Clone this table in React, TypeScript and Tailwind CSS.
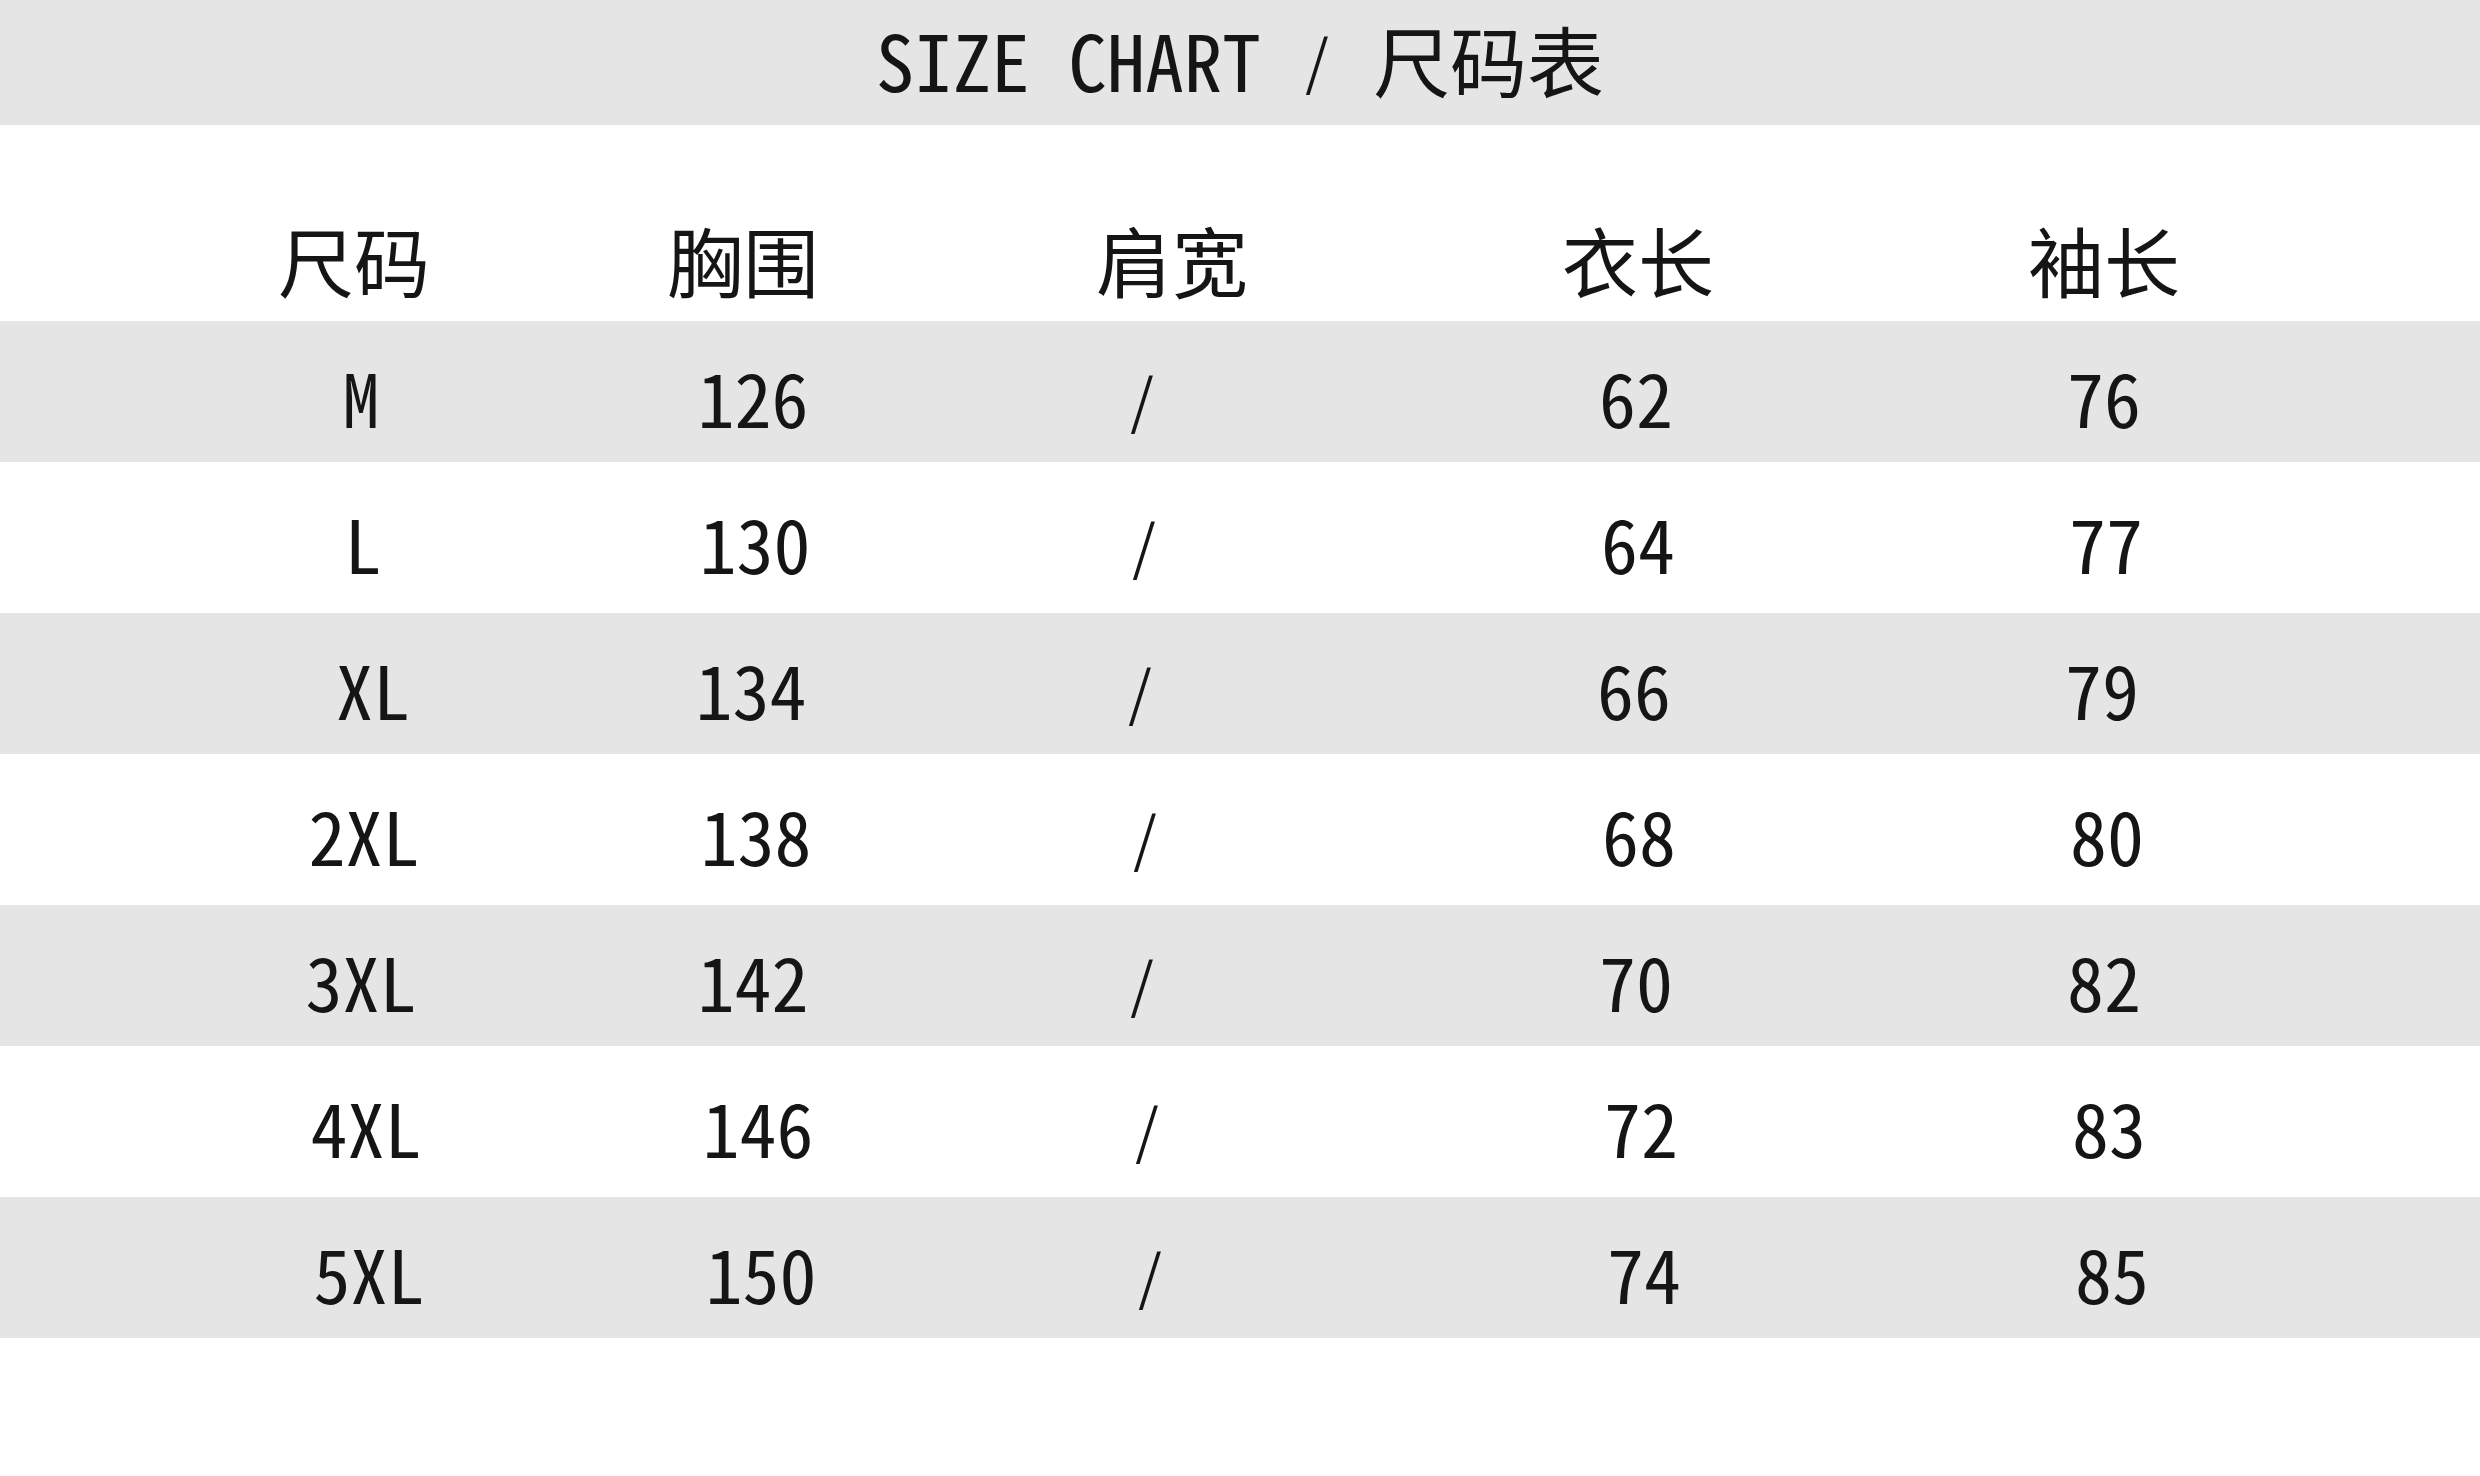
const font =
  "font-['Noto_Sans_Mono_CJK_SC','Noto_Sans_CJK_SC','DejaVu_Sans_Mono',monospace]";
const thinSlash = "font-['DejaVu_Sans','Noto_Sans_Mono_CJK_SC',sans-serif] font-extralight";

const headers = ["尺码", "胸围", "肩宽", "衣长", "袖长"];

// the source image drifts a few px to the right as it goes down
const rows = [
  { pad: "pl-[158px]", v: ["M", "126", "/", "62", "76"] },
  { pad: "pl-[160px]", v: ["L", "130", "/", "64", "77"] },
  { pad: "pl-[156px]", v: ["XL", "134", "/", "66", "79"] },
  { pad: "pl-[161px]", v: ["2XL", "138", "/", "68", "80"] },
  { pad: "pl-[158px]", v: ["3XL", "142", "/", "70", "82"] },
  { pad: "pl-[163px]", v: ["4XL", "146", "/", "72", "83"] },
  { pad: "pl-[166px]", v: ["5XL", "150", "/", "74", "85"] },
];

// nudges so each column sits where the chart puts it
const headCell = ["pr-[8px]", "pr-[14px]", "pl-[44px]", "pl-[4px]", ""];
const dataCell = ["pl-[6px]", "pl-[6px]", "pr-[16px] pt-[12px]", "", ""];

const cols = "grid grid-cols-[400px_384px_416px_556px_380px]";

export default function App() {
  return (
    <main
      className={`h-[1476px] w-[2480px] overflow-hidden bg-white text-[#151515] ${font}`}
    >
      <header className="flex h-[125px] items-center justify-center bg-[#e5e5e5] pb-[8px] text-[77px] leading-none">
        SIZE CHART
        <span className={`px-[44px] pt-[8px] text-[72px] ${thinSlash}`}>/</span>
        尺码表
      </header>

      <div className={`${cols} h-[196px] items-end pb-[24px] pl-[158px] text-[76px] leading-none`}>
        {headers.map((h, i) => (
          <div key={h} className={`text-center ${headCell[i]}`}>
            {h}
          </div>
        ))}
      </div>

      {rows.map((r, idx) => (
        <div
          key={r.v[0]}
          className={`${cols} ${r.pad} items-center pt-[8px] text-[74px] leading-none ${
            idx % 2 === 0 ? "h-[141px] bg-[#e5e5e5]" : "h-[151px] bg-white"
          }`}
        >
          {r.v.map((v, i) => (
            <div
              key={i}
              className={`text-center ${
                i === 0 && v === "XL" ? "pl-[34px]" : dataCell[i]
              } ${i === 2 ? `text-[72px] ${thinSlash}` : ""}`}
            >
              {v}
            </div>
          ))}
        </div>
      ))}
    </main>
  );
}
